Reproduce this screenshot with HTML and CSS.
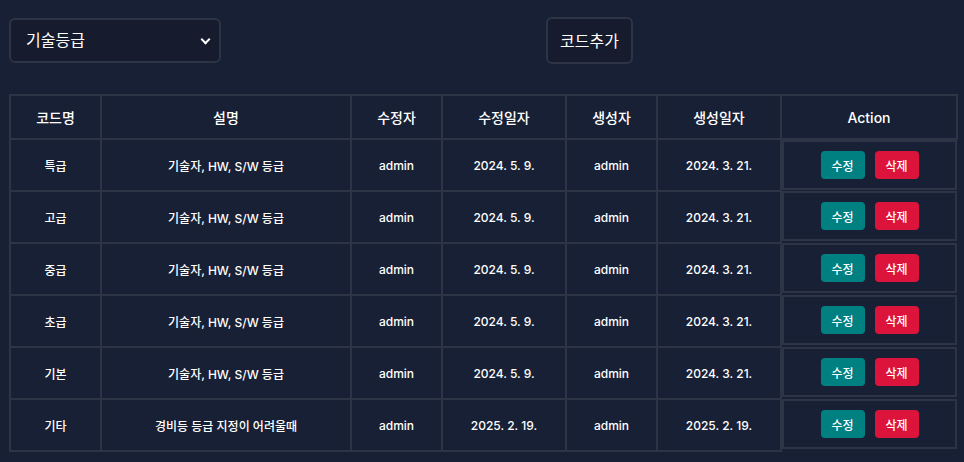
FILE: index.html
```html
<!DOCTYPE html>
<html lang="ko">
  <head>
    <meta charset="UTF-8" />
    <title>코드 관리</title>
    <link rel="stylesheet" href="styles.css">
  </head>
  <body>
    <div class="page">
      <div class="toolbar">
        <div class="select-wrap">
          <select class="code-select">
            <option>기술등급</option>
          </select>
        </div>
        <button class="add-button">코드추가</button>
      </div>

      <table class="code-table">
        <colgroup>
          <col style="width: 91px" />
          <col style="width: 250px" />
          <col style="width: 91px" />
          <col style="width: 124px" />
          <col style="width: 91px" />
          <col style="width: 124px" />
          <col style="width: 176px" />
        </colgroup>
        <thead>
          <tr>
            <th>코드명</th>
            <th>설명</th>
            <th>수정자</th>
            <th>수정일자</th>
            <th>생성자</th>
            <th>생성일자</th>
            <th>Action</th>
          </tr>
        </thead>
        <tbody>
          <tr>
            <td>특급</td>
            <td>기술자, HW, S/W 등급</td>
            <td>admin</td>
            <td>2024. 5. 9.</td>
            <td>admin</td>
            <td>2024. 3. 21.</td>
            <td class="actions"><button class="btn-edit">수정</button><button class="btn-delete">삭제</button></td>
          </tr>
          <tr>
            <td>고급</td>
            <td>기술자, HW, S/W 등급</td>
            <td>admin</td>
            <td>2024. 5. 9.</td>
            <td>admin</td>
            <td>2024. 3. 21.</td>
            <td class="actions"><button class="btn-edit">수정</button><button class="btn-delete">삭제</button></td>
          </tr>
          <tr>
            <td>중급</td>
            <td>기술자, HW, S/W 등급</td>
            <td>admin</td>
            <td>2024. 5. 9.</td>
            <td>admin</td>
            <td>2024. 3. 21.</td>
            <td class="actions"><button class="btn-edit">수정</button><button class="btn-delete">삭제</button></td>
          </tr>
          <tr>
            <td>초급</td>
            <td>기술자, HW, S/W 등급</td>
            <td>admin</td>
            <td>2024. 5. 9.</td>
            <td>admin</td>
            <td>2024. 3. 21.</td>
            <td class="actions"><button class="btn-edit">수정</button><button class="btn-delete">삭제</button></td>
          </tr>
          <tr>
            <td>기본</td>
            <td>기술자, HW, S/W 등급</td>
            <td>admin</td>
            <td>2024. 5. 9.</td>
            <td>admin</td>
            <td>2024. 3. 21.</td>
            <td class="actions"><button class="btn-edit">수정</button><button class="btn-delete">삭제</button></td>
          </tr>
          <tr>
            <td>기타</td>
            <td>경비등 등급 지정이 어려울때</td>
            <td>admin</td>
            <td>2025. 2. 19.</td>
            <td>admin</td>
            <td>2025. 2. 19.</td>
            <td class="actions"><button class="btn-edit">수정</button><button class="btn-delete">삭제</button></td>
          </tr>
        </tbody>
      </table>
    </div>
  </body>
</html>
```

FILE: styles.css
```css
body {
  margin: 0;
  padding: 0;
  font-family: Inter, "Noto Sans CJK KR", sans-serif;
  background-color: #182035;
  color: #ffffff;
}

.page {
  padding: 16px 8px 0 9px;
}

.toolbar {
  display: grid;
  grid-template-columns: 537px auto;
  align-items: center;
  height: 48px;
}

.select-wrap {
  position: relative;
  width: 212px;
}

.code-select {
  width: 212px;
  height: 45px;
  padding: 0 30px 0 15px;
  font-family: inherit;
  font-size: 16px;
  color: #ffffff;
  background-color: #161b2d;
  border: 2px solid #2c3446;
  border-radius: 6px;
  appearance: none;
  outline: none;
}

/* 드롭다운 화살표 */
.select-wrap::after {
  content: "";
  position: absolute;
  right: 12px;
  top: 18px;
  width: 5px;
  height: 5px;
  border-right: 2px solid #ffffff;
  border-bottom: 2px solid #ffffff;
  transform: rotate(45deg);
}

.add-button {
  justify-self: start;
  height: 47px;
  padding: 0 12px;
  font-family: inherit;
  font-size: 16px;
  color: #ffffff;
  background-color: #161b2d;
  border: 2px solid #2c3446;
  border-radius: 6px;
  cursor: pointer;
}

.code-table {
  margin-top: 30px;
  width: 947px;
  table-layout: fixed;
  border-collapse: collapse;
}

.code-table th,
.code-table td {
  border: 2px solid #2c3446;
  text-align: center;
  padding: 0;
}

.code-table th {
  height: 42px;
  font-size: 14px;
  font-weight: 500;
}

.code-table td {
  height: 50px;
  font-size: 12px;
  font-weight: 500;
}

.code-table td.actions {
  display: flex;
  justify-content: center;
  align-items: center;
  gap: 10px;
  height: 46px;
}

.btn-edit,
.btn-delete {
  width: 44px;
  height: 28px;
  font-family: inherit;
  font-size: 12px;
  font-weight: 500;
  color: #ffffff;
  border: none;
  border-radius: 4px;
  cursor: pointer;
}

.btn-edit {
  background-color: #008080;
}

.btn-delete {
  background-color: #dc143c;
}
```
